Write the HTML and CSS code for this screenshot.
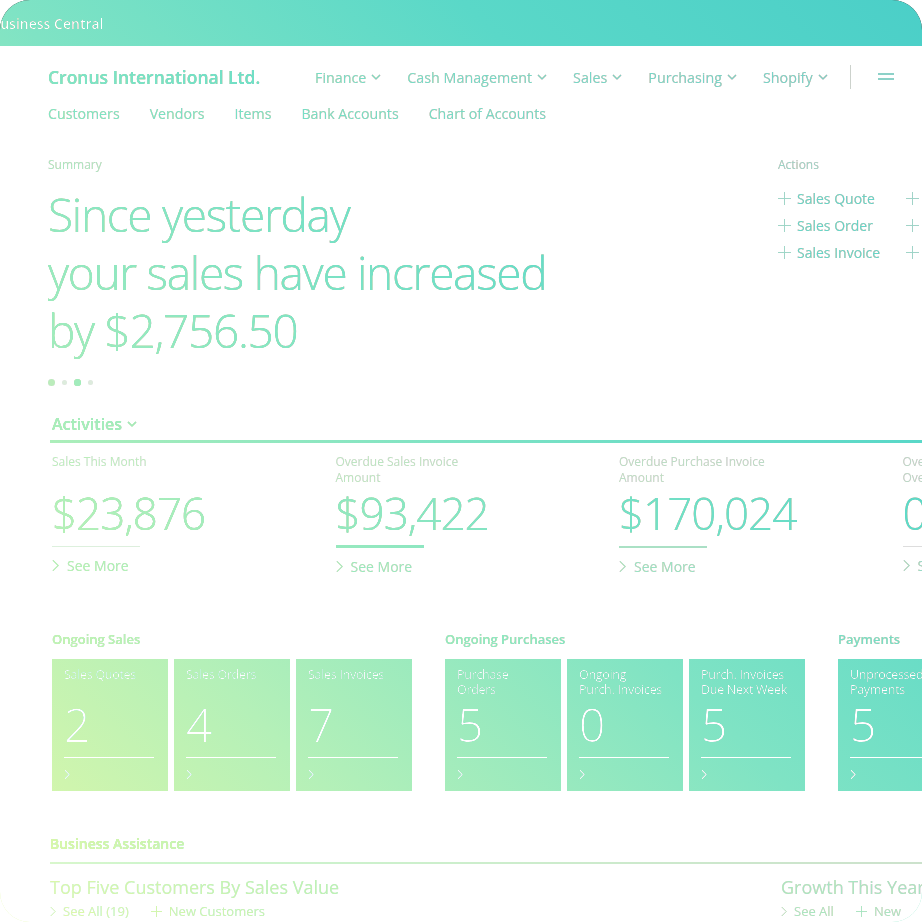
FILE: index.html
```html
<!DOCTYPE html>
<html lang="en">
<head>
<meta charset="UTF-8" />
<meta name="viewport" content="width=device-width, initial-scale=1" />
<title>Business Central - Role Center</title>
<link rel="stylesheet" href="styles.css">
</head>
<body>
<div class="frame">
  <div class="screen">
    <header class="topbar"><span class="product">Business Central</span></header>

    <nav class="nav">
      <div class="nav-main">
        <span class="company">Cronus International Ltd.</span>
        <ul class="menu">
          <li>Finance <svg class="caret" viewBox="0 0 10 6"><polyline points="1,1 5,5 9,1"/></svg></li>
          <li>Cash Management <svg class="caret" viewBox="0 0 10 6"><polyline points="1,1 5,5 9,1"/></svg></li>
          <li>Sales <svg class="caret" viewBox="0 0 10 6"><polyline points="1,1 5,5 9,1"/></svg></li>
          <li>Purchasing <svg class="caret" viewBox="0 0 10 6"><polyline points="1,1 5,5 9,1"/></svg></li>
          <li>Shopify <svg class="caret" viewBox="0 0 10 6"><polyline points="1,1 5,5 9,1"/></svg></li>
        </ul>
        <span class="divider"></span>
        <svg class="burger" viewBox="0 0 16 8"><line x1="0" y1="1" x2="16" y2="1"/><line x1="0" y1="6" x2="16" y2="6"/></svg>
      </div>
      <ul class="quick">
        <li>Customers</li>
        <li>Vendors</li>
        <li>Items</li>
        <li>Bank Accounts</li>
        <li>Chart of Accounts</li>
      </ul>
    </nav>

    <section class="headline">
      <div class="summary">
        <div class="caption">Summary</div>
        <h1 class="insight">Since yesterday<br>your sales have increased<br>by $2,756.50</h1>
        <div class="pager">
          <span class="dot"></span><span class="dot small"></span><span class="dot active"></span><span class="dot small"></span>
        </div>
      </div>
      <div class="actions">
        <div class="caption">Actions</div>
        <div class="action-cols">
          <ul class="action-list">
            <li><svg class="plus" viewBox="0 0 14 14"><line x1="7" y1="0" x2="7" y2="14"/><line x1="0" y1="7" x2="14" y2="7"/></svg>Sales Quote</li>
            <li><svg class="plus" viewBox="0 0 14 14"><line x1="7" y1="0" x2="7" y2="14"/><line x1="0" y1="7" x2="14" y2="7"/></svg>Sales Order</li>
            <li><svg class="plus" viewBox="0 0 14 14"><line x1="7" y1="0" x2="7" y2="14"/><line x1="0" y1="7" x2="14" y2="7"/></svg>Sales Invoice</li>
          </ul>
          <ul class="action-list">
            <li><svg class="plus" viewBox="0 0 14 14"><line x1="7" y1="0" x2="7" y2="14"/><line x1="0" y1="7" x2="14" y2="7"/></svg>Purchase Quote</li>
            <li><svg class="plus" viewBox="0 0 14 14"><line x1="7" y1="0" x2="7" y2="14"/><line x1="0" y1="7" x2="14" y2="7"/></svg>Purchase Order</li>
            <li><svg class="plus" viewBox="0 0 14 14"><line x1="7" y1="0" x2="7" y2="14"/><line x1="0" y1="7" x2="14" y2="7"/></svg>Purchase Invoice</li>
          </ul>
        </div>
      </div>
    </section>

    <section class="activities">
      <h2 class="section-title">Activities <svg class="caret" viewBox="0 0 10 6"><polyline points="1,1 5,5 9,1"/></svg></h2>
      <div class="cues">
        <div class="cue">
          <div class="cue-label">Sales This Month</div>
          <div class="cue-value">$23,876</div>
          <div class="cue-bar"></div>
          <div class="see-more"><svg class="chev" viewBox="0 0 8 14"><polyline points="1,1 7,7 1,13"/></svg>See More</div>
        </div>
        <div class="cue">
          <div class="cue-label">Overdue Sales Invoice<br>Amount</div>
          <div class="cue-value">$93,422</div>
          <div class="cue-bar strong"></div>
          <div class="see-more"><svg class="chev" viewBox="0 0 8 14"><polyline points="1,1 7,7 1,13"/></svg>See More</div>
        </div>
        <div class="cue">
          <div class="cue-label">Overdue Purchase Invoice<br>Amount</div>
          <div class="cue-value">$170,024</div>
          <div class="cue-bar medium"></div>
          <div class="see-more"><svg class="chev" viewBox="0 0 8 14"><polyline points="1,1 7,7 1,13"/></svg>See More</div>
        </div>
        <div class="cue">
          <div class="cue-label">Overdue Sales Invoices<br>Overdue</div>
          <div class="cue-value">0</div>
          <div class="cue-bar"></div>
          <div class="see-more"><svg class="chev" viewBox="0 0 8 14"><polyline points="1,1 7,7 1,13"/></svg>See More</div>
        </div>
      </div>
    </section>

    <section class="tile-groups">
      <div class="group">
        <h3 class="group-title">Ongoing Sales</h3>
        <div class="tiles">
          <div class="tile"><div class="tile-label">Sales Quotes</div><div class="tile-value">2</div><div class="tile-rule"></div><svg class="chev" viewBox="0 0 8 14"><polyline points="1,1 7,7 1,13"/></svg></div>
          <div class="tile"><div class="tile-label">Sales Orders</div><div class="tile-value">4</div><div class="tile-rule"></div><svg class="chev" viewBox="0 0 8 14"><polyline points="1,1 7,7 1,13"/></svg></div>
          <div class="tile"><div class="tile-label">Sales Invoices</div><div class="tile-value">7</div><div class="tile-rule"></div><svg class="chev" viewBox="0 0 8 14"><polyline points="1,1 7,7 1,13"/></svg></div>
        </div>
      </div>
      <div class="group">
        <h3 class="group-title">Ongoing Purchases</h3>
        <div class="tiles">
          <div class="tile"><div class="tile-label">Purchase<br>Orders</div><div class="tile-value">5</div><div class="tile-rule"></div><svg class="chev" viewBox="0 0 8 14"><polyline points="1,1 7,7 1,13"/></svg></div>
          <div class="tile"><div class="tile-label">Ongoing<br>Purch. Invoices</div><div class="tile-value">0</div><div class="tile-rule"></div><svg class="chev" viewBox="0 0 8 14"><polyline points="1,1 7,7 1,13"/></svg></div>
          <div class="tile"><div class="tile-label">Purch. Invoices<br>Due Next Week</div><div class="tile-value">5</div><div class="tile-rule"></div><svg class="chev" viewBox="0 0 8 14"><polyline points="1,1 7,7 1,13"/></svg></div>
        </div>
      </div>
      <div class="group">
        <h3 class="group-title">Payments</h3>
        <div class="tiles">
          <div class="tile"><div class="tile-label">Unprocessed<br>Payments</div><div class="tile-value">5</div><div class="tile-rule"></div><svg class="chev" viewBox="0 0 8 14"><polyline points="1,1 7,7 1,13"/></svg></div>
        </div>
      </div>
    </section>

    <section class="assist">
      <h2 class="section-title">Business Assistance</h2>
      <div class="assist-cols">
        <div class="chart-part">
          <div class="part-title">Top Five Customers By Sales Value</div>
          <div class="part-links">
            <span><svg class="chev" viewBox="0 0 8 14"><polyline points="1,1 7,7 1,13"/></svg>See All (19)</span>
            <span><svg class="plus" viewBox="0 0 14 14"><line x1="7" y1="0" x2="7" y2="14"/><line x1="0" y1="7" x2="14" y2="7"/></svg>New Customers</span>
          </div>
        </div>
        <div class="chart-part">
          <div class="part-title">Growth This Year</div>
          <div class="part-links">
            <span><svg class="chev" viewBox="0 0 8 14"><polyline points="1,1 7,7 1,13"/></svg>See All</span>
            <span><svg class="plus" viewBox="0 0 14 14"><line x1="7" y1="0" x2="7" y2="14"/><line x1="0" y1="7" x2="14" y2="7"/></svg>New</span>
          </div>
        </div>
      </div>
    </section>
  </div>
  <!-- colour wash laid over the whole window -->
  <div class="tint"></div>
</div>
</body>
</html>
```

FILE: styles.css
```css
/* Reset and basic */
* {
  box-sizing: border-box;
}
body {
  margin: 0;
  background: #fff;
  font-family: 'Open Sans', 'Noto Sans', sans-serif;
  color: #222;
}
ul {
  list-style: none;
  margin: 0;
  padding: 0;
}
h1, h2, h3 {
  margin: 0;
  font-weight: inherit;
}
svg {
  fill: none;
  stroke: currentColor;
}

/* Window */
.frame {
  position: relative;
  width: 922px;
  height: 922px;
  border-radius: 30px;
  overflow: hidden;
  background: #fff;
  isolation: isolate;
}
.screen {
  width: 1100px;
  height: 100%;
  background: #fff;
}
.tint {
  position: absolute;
  inset: 0;
  pointer-events: none;
  mix-blend-mode: lighten;
  background: linear-gradient(to top right, #e4f9a6 0%, #b4f0b8 25%, #7fe3c4 50%, #5ad8c8 75%, #4bcfc8 100%);
}

/* Top bar */
.topbar {
  height: 46px;
  background: #111;
  color: #fff;
  display: flex;
  align-items: center;
}
.product {
  margin-left: -9px;
  font-size: 14px;
  font-weight: 600;
}

/* Navigation */
.nav {
  padding: 13px 0 0 48px;
}
.nav-main {
  height: 36px;
  display: flex;
  align-items: center;
}
.company {
  font-size: 17.5px;
  font-weight: 600;
  color: #333;
  width: 267px;
}
.menu {
  display: flex;
  gap: 26px;
  font-size: 14.3px;
  color: #777;
}
.menu li {
  display: flex;
  align-items: center;
  gap: 5px;
}
.caret {
  width: 10px;
  height: 6px;
  stroke-width: 1.2;
}
.divider {
  width: 1px;
  height: 24px;
  background: #ccc;
  margin-left: 22px;
}
.burger {
  width: 16px;
  height: 8px;
  margin-left: 27px;
  stroke: #666;
  stroke-width: 1.5;
}
.quick {
  height: 36px;
  display: flex;
  align-items: center;
  gap: 30px;
  font-size: 14.2px;
  color: #777;
}

/* Headline */
.headline {
  display: flex;
  padding: 26px 0 0 48px;
}
.summary {
  width: 730px;
}
.caption {
  font-size: 12px;
  line-height: 16px;
  color: #aaa;
}
.insight {
  margin-top: 12px;
  font-size: 46px;
  font-weight: 300;
  line-height: 58px;
  letter-spacing: -1.3px;
  color: #333;
}
.pager {
  display: flex;
  gap: 7px;
  margin-top: 20px;
  height: 7px;
  align-items: center;
}
.dot {
  width: 7px;
  height: 7px;
  border-radius: 50%;
  background: #bbb;
}
.dot.small {
  width: 5px;
  height: 5px;
  background: #ddd;
}
.dot.active {
  background: #777;
}
.actions .caption {
  color: #999;
}
.action-cols {
  display: flex;
  gap: 26px;
  margin-top: 12px;
}
.action-list li {
  display: flex;
  align-items: center;
  gap: 6px;
  height: 27px;
  font-size: 14px;
  color: #666;
}
.plus {
  width: 13px;
  height: 13px;
  stroke-width: 1;
  stroke: #999;
}

/* Activities */
.activities {
  margin-top: 27px;
  padding-left: 50px;
}
.section-title {
  display: flex;
  align-items: center;
  gap: 5px;
  padding-left: 2px;
  font-size: 16px;
  line-height: 22px;
  font-weight: 600;
  color: #555;
}
.activities .section-title {
  border-bottom: 3px solid #444;
  padding-bottom: 5px;
}
.cues {
  display: grid;
  grid-template-columns: repeat(4, 283.5px);
  padding: 11px 0 0 2px;
}
.cue-label {
  height: 32px;
  font-size: 12px;
  line-height: 16px;
  color: #bbb;
}
.cue-value {
  margin-top: 2px;
  font-size: 44px;
  font-weight: 300;
  line-height: 50px;
  letter-spacing: -1px;
  color: #333;
}
.cue-bar {
  width: 88px;
  height: 1px;
  margin-top: 8px;
  background: #ddd;
  margin-bottom: 2px;
}
.cue-bar.strong {
  height: 3px;
  margin-top: 7px;
  margin-bottom: 0;
  background: #666;
}
.cue-bar.medium {
  height: 2px;
  margin-bottom: 1px;
  background: #aaa;
}
.see-more {
  display: flex;
  align-items: center;
  gap: 8px;
  height: 20px;
  margin-top: 8px;
  font-size: 14px;
  color: #999;
}
.chev {
  width: 7px;
  height: 13px;
  stroke-width: 1.2;
}

/* Tiles */
.tile-groups {
  display: flex;
  gap: 33px;
  margin-top: 54px;
  padding-left: 52px;
}
.group-title {
  font-size: 13px;
  line-height: 18px;
  font-weight: 600;
  color: #777;
}
.tiles {
  display: flex;
  gap: 6px;
  margin-top: 11px;
}
.tile {
  width: 116px;
  height: 132px;
  padding: 8px 12px 0;
  background: #106e6e;
  color: #fff;
}
.tile-label {
  height: 30px;
  font-size: 12.5px;
  line-height: 15px;
  letter-spacing: -0.3px;
  white-space: nowrap;
  color: #fff;
}
.tile-value {
  margin-top: 5px;
  font-size: 46px;
  font-weight: 300;
  line-height: 44px;
}
.tile-rule {
  width: 90px;
  height: 1px;
  margin-top: 11px;
  background: #fff;
}
.tile .chev {
  display: block;
  margin-top: 11px;
  width: 6px;
  height: 11px;
  stroke-width: 1.6;
}

/* Business assistance */
.assist {
  margin-top: 44px;
  padding-left: 50px;
}
.assist .section-title {
  font-size: 14px;
  line-height: 18px;
  padding-left: 0;
  padding-bottom: 9px;
  border-bottom: 2px solid #ccc;
  color: #444;
}
.assist-cols {
  display: flex;
  padding-top: 11px;
}
.chart-part {
  flex: 0 0 731px;
}
.part-title {
  font-size: 18px;
  line-height: 24px;
  color: #aaa;
}
.part-links {
  display: flex;
  gap: 22px;
  margin-top: 2px;
  font-size: 13px;
  line-height: 20px;
  color: #aaa;
}
.part-links span {
  display: flex;
  align-items: center;
  gap: 7px;
}
.part-links .chev {
  width: 6px;
  height: 11px;
}
.part-links .plus {
  width: 11px;
  height: 11px;
}
```
